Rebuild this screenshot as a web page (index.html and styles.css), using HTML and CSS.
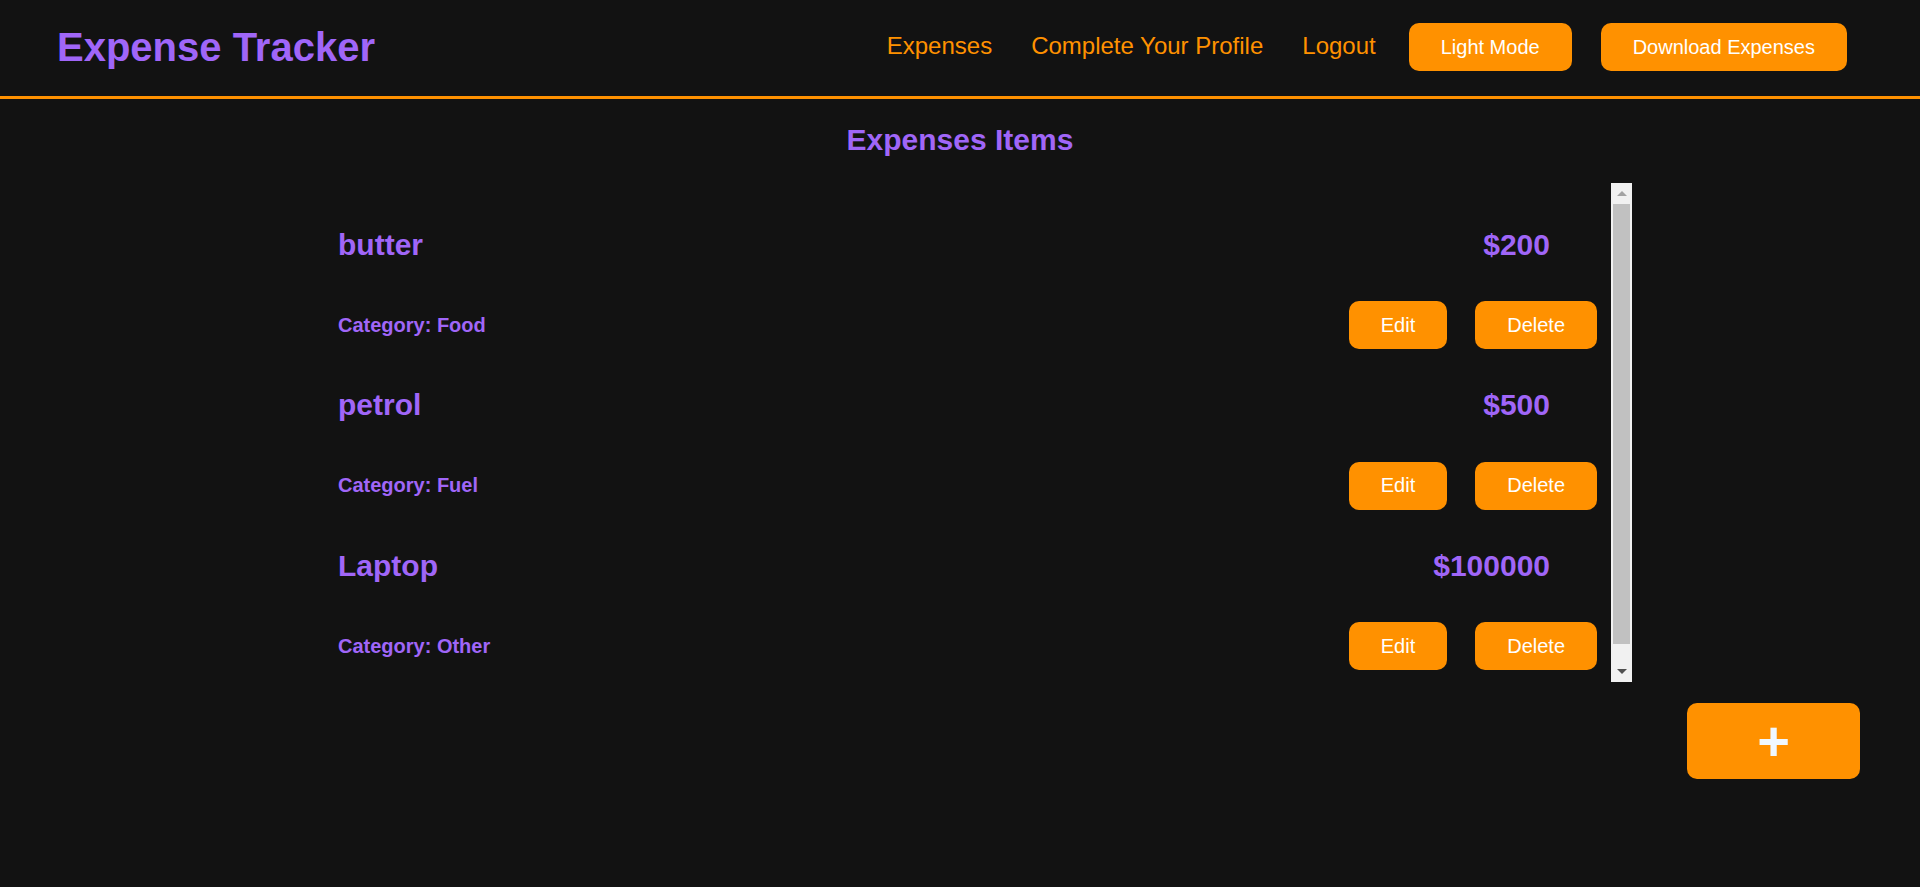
FILE: index.html
```html
<!DOCTYPE html>
<html lang="en">
<head>
<meta charset="utf-8">
<title>Expense Tracker</title>
<link rel="stylesheet" href="styles.css">
</head>
<body>
<header class="topbar">
  <div class="brand">Expense Tracker</div>
  <nav class="nav">
    <a class="nav-link" href="#">Expenses</a>
    <a class="nav-link" href="#">Complete Your Profile</a>
    <a class="nav-link" href="#">Logout</a>
    <button class="btn nav-btn">Light Mode</button>
    <button class="btn nav-btn">Download Expenses</button>
  </nav>
</header>
<main class="main">
  <h2 class="page-title">Expenses Items</h2>
  <div class="list-frame">
    <div class="list">
      <div class="item">
        <div class="item-head"><span class="item-name">butter</span><span class="item-price">$200</span></div>
        <div class="item-foot"><span class="item-cat">Category: Food</span><div class="actions"><button class="btn">Edit</button><button class="btn">Delete</button></div></div>
      </div>
      <div class="item">
        <div class="item-head"><span class="item-name">petrol</span><span class="item-price">$500</span></div>
        <div class="item-foot"><span class="item-cat">Category: Fuel</span><div class="actions"><button class="btn">Edit</button><button class="btn">Delete</button></div></div>
      </div>
      <div class="item">
        <div class="item-head"><span class="item-name">Laptop</span><span class="item-price">$100000</span></div>
        <div class="item-foot"><span class="item-cat">Category: Other</span><div class="actions"><button class="btn">Edit</button><button class="btn">Delete</button></div></div>
      </div>
    </div>
    <div class="scrollbar">
      <div class="sb-btn"><span class="arrow-up"></span></div>
      <div class="sb-track"><div class="sb-thumb"></div></div>
      <div class="sb-btn"><span class="arrow-down"></span></div>
    </div>
  </div>
  <div class="add-row"><button class="add-btn">+</button></div>
</main>
</body>
</html>
```
FILE: styles.css
```css
html, body {
  margin: 0;
  background: #121212;
  font-family: "Liberation Sans", Arial, Helvetica, sans-serif;
}

.topbar {
  height: 96px;
  box-sizing: content-box;
  border-bottom: 3px solid #ff9100;
  display: flex;
  align-items: center;
  justify-content: space-between;
  padding: 0 73px 0 57px;
}

.topbar > * {
  margin-bottom: 2px;
}

.brand {
  color: #a066f8;
  font-size: 40px;
  font-weight: bold;
  line-height: 46px;
}

.nav {
  display: flex;
  align-items: center;
  gap: 29px;
}

.nav-link {
  color: #ff9100;
  font-size: 24px;
  text-decoration: none;
  padding: 0 4px 2px 6px;
  line-height: 28px;
}

.btn {
  background: #ff9100;
  color: #ffffff;
  border: none;
  border-radius: 10px;
  font-family: "Liberation Sans", Arial, Helvetica, sans-serif;
  font-size: 20px;
  height: 48px;
  padding: 0 32px;
  line-height: 23px;
  cursor: pointer;
}

.page-title {
  color: #a066f8;
  font-size: 30px;
  font-weight: bold;
  text-align: center;
  line-height: 34px;
  margin: 24px 0 26px;
}

.list-frame {
  width: 1344px;
  height: 499px;
  margin: 0 auto;
  display: flex;
}

.list {
  flex: 1;
  overflow: hidden;
  padding: 25px 14px 0 50px;
}

.scrollbar {
  width: 21px;
  background: #f1f1f1;
  display: flex;
  flex-direction: column;
}

.sb-btn {
  height: 21px;
  display: flex;
  align-items: center;
  justify-content: center;
}

.arrow-up {
  width: 0;
  height: 0;
  border-left: 5px solid transparent;
  border-right: 5px solid transparent;
  border-bottom: 5px solid #a3a3a3;
}

.arrow-down {
  width: 0;
  height: 0;
  border-left: 5px solid transparent;
  border-right: 5px solid transparent;
  border-top: 5px solid #505050;
}

.sb-track {
  flex: 1;
  padding: 0 2px;
}

.sb-thumb {
  height: 440px;
  background: #c1c1c1;
}

.item {
  display: flex;
  flex-direction: column;
  gap: 39px;
  padding: 19.5px 0;
}

.item-head {
  display: flex;
  justify-content: space-between;
  align-items: center;
  color: #a066f8;
  font-size: 30px;
  font-weight: bold;
  line-height: 34.5px;
}

.item-price {
  margin-right: 47px;
}

.item-foot {
  display: flex;
  justify-content: space-between;
  align-items: center;
  height: 48px;
}

.item-cat {
  color: #a066f8;
  font-size: 20px;
  font-weight: bold;
}

.actions {
  display: flex;
  gap: 28px;
}

.add-row {
  display: flex;
  justify-content: flex-end;
  padding-right: 60px;
  margin-top: 21px;
}

.add-btn {
  width: 173px;
  height: 76px;
  background: #ff9100;
  color: #f0f8ff;
  border: none;
  border-radius: 10px;
  font-family: "Liberation Sans", Arial, Helvetica, sans-serif;
  font-size: 56px;
  font-weight: bold;
  line-height: 1;
  display: flex;
  align-items: center;
  justify-content: center;
  padding: 0;
  cursor: pointer;
}
```
